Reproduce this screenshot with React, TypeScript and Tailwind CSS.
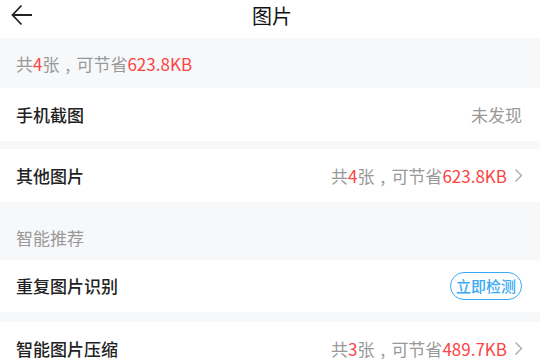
import React from "react";

const font = { fontFamily: '"Noto Sans CJK SC", "Noto Sans", sans-serif' };

function Chevron() {
  return (
    <svg width="9" height="15" viewBox="0 0 9 15" className="ml-[7px]">
      <path d="M1.5 1.5 L7.5 7.5 L1.5 13.5" fill="none" stroke="#a8a8a8" strokeWidth="1.3" />
    </svg>
  );
}

function Saving({ n, size }: { n: string; size: string }) {
  return (
    <span className="text-[17px] text-[#999999]">
      共<span className="text-[#fa4545]">{n}</span>张<span className="inline-block w-[17px] text-center">,</span>可节省<span className="text-[#fa4545]">{size}</span>
    </span>
  );
}

export default function App() {
  return (
    <div className="w-[540px] h-[360px] overflow-hidden bg-[#f7f8fa] flex flex-col" style={font}>
      <div className="h-[38px] shrink-0 bg-white relative flex items-center justify-center">
        <svg className="absolute left-[11px] top-[4px]" width="22" height="22" viewBox="0 0 22 22">
          <path d="M10.5 1.5 L1.5 11 L10.5 20.5 M1.5 11 H21" fill="none" stroke="#222" strokeWidth="1.8" strokeLinejoin="miter" />
        </svg>
        <span className="text-[20px] text-[#111] leading-none ml-[4px] -mt-[7px]">图片</span>
      </div>
      <div className="h-[50px] shrink-0 flex items-center px-[16px] pt-[2px]">
        <Saving n="4" size="623.8KB" />
      </div>
      <div className="h-[53px] shrink-0 bg-white flex items-center justify-between pl-[16px] pr-[18px]">
        <span className="text-[17px] font-medium text-[#222]">手机截图</span>
        <span className="text-[17px] text-[#999999]">未发现</span>
      </div>
      <div className="h-[8px] shrink-0" />
      <div className="h-[53px] shrink-0 bg-white flex items-center justify-between pl-[16px] pr-[17px]">
        <span className="text-[17px] font-medium text-[#222]">其他图片</span>
        <div className="flex items-center">
          <Saving n="4" size="623.8KB" />
          <Chevron />
        </div>
      </div>
      <div className="h-[58px] shrink-0 flex items-center px-[16px] pt-[14px]">
        <span className="text-[17px] text-[#999999]">智能推荐</span>
      </div>
      <div className="h-[52px] shrink-0 bg-white flex items-center justify-between pl-[16px] pr-[18px]">
        <span className="text-[17px] font-medium text-[#222]">重复图片识别</span>
        <div className="w-[72px] h-[28px] rounded-full border-[1.5px] border-[#3aa9f4] flex items-center justify-center text-[15px] font-medium text-[#3aa9f4]">
          立即检测
        </div>
      </div>
      <div className="h-[10px] shrink-0" />
      <div className="h-[53px] shrink-0 bg-white flex items-center justify-between pl-[16px] pr-[17px]">
        <span className="text-[17px] font-medium text-[#222]">智能图片压缩</span>
        <div className="flex items-center">
          <Saving n="3" size="489.7KB" />
          <Chevron />
        </div>
      </div>
    </div>
  );
}
